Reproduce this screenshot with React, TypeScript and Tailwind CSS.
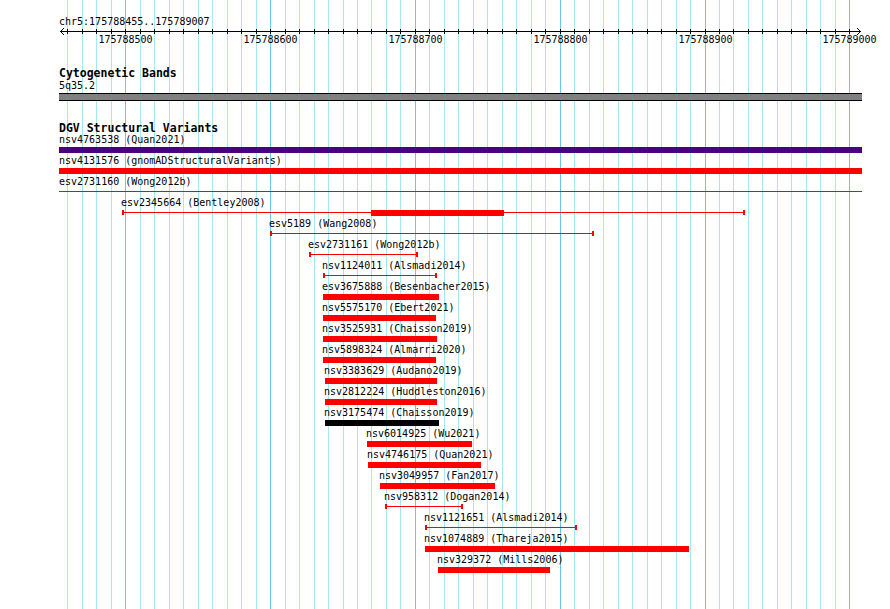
import React from 'react'

type Feature = {
  id: string
  source: string
  x1: number
  x2: number
  kind: 'bar' | 'line' | 'span'
  color: string
  thick?: [number, number]
}

// pixel positions of the 10bp grid (175788460 .. 175789000)
const grid = Array.from({ length: 55 }, (_, i) => {
  const k = i - 4
  return { x: Math.round(125.3 + k * 14.48), major: k % 10 === 0, k }
})

const majors = grid.filter((g) => g.major)

const features: Feature[] = [
  { id: 'nsv4763538', source: 'Quan2021', x1: 59, x2: 862, kind: 'bar', color: 'bg-[#4b0082]' },
  { id: 'nsv4131576', source: 'gnomADStructuralVariants', x1: 59, x2: 862, kind: 'bar', color: 'bg-[#ff0000]' },
  { id: 'esv2731160', source: 'Wong2012b', x1: 59, x2: 862, kind: 'span', color: 'bg-[#ff0000]' },
  { id: 'esv2345664', source: 'Bentley2008', x1: 122, x2: 745, kind: 'line', color: 'bg-[#ff0000]', thick: [371, 504] },
  { id: 'esv5189', source: 'Wang2008', x1: 270, x2: 594, kind: 'line', color: 'bg-[#ff0000]' },
  { id: 'esv2731161', source: 'Wong2012b', x1: 309, x2: 418, kind: 'line', color: 'bg-[#ff0000]' },
  { id: 'nsv1124011', source: 'Alsmadi2014', x1: 323, x2: 437, kind: 'line', color: 'bg-[#ff0000]' },
  { id: 'esv3675888', source: 'Besenbacher2015', x1: 323, x2: 439, kind: 'bar', color: 'bg-[#ff0000]' },
  { id: 'nsv5575170', source: 'Ebert2021', x1: 323, x2: 436, kind: 'bar', color: 'bg-[#ff0000]' },
  { id: 'nsv3525931', source: 'Chaisson2019', x1: 323, x2: 437, kind: 'bar', color: 'bg-[#ff0000]' },
  { id: 'nsv5898324', source: 'Almarri2020', x1: 323, x2: 436, kind: 'bar', color: 'bg-[#ff0000]' },
  { id: 'nsv3383629', source: 'Audano2019', x1: 325, x2: 437, kind: 'bar', color: 'bg-[#ff0000]' },
  { id: 'nsv2812224', source: 'Huddleston2016', x1: 325, x2: 437, kind: 'bar', color: 'bg-[#ff0000]' },
  { id: 'nsv3175474', source: 'Chaisson2019', x1: 325, x2: 439, kind: 'bar', color: 'bg-black' },
  { id: 'nsv6014925', source: 'Wu2021', x1: 367, x2: 472, kind: 'bar', color: 'bg-[#ff0000]' },
  { id: 'nsv4746175', source: 'Quan2021', x1: 368, x2: 481, kind: 'bar', color: 'bg-[#ff0000]' },
  { id: 'nsv3049957', source: 'Fan2017', x1: 380, x2: 495, kind: 'bar', color: 'bg-[#ff0000]' },
  { id: 'nsv958312', source: 'Dogan2014', x1: 385, x2: 463, kind: 'line', color: 'bg-[#ff0000]' },
  { id: 'nsv1121651', source: 'Alsmadi2014', x1: 425, x2: 577, kind: 'line', color: 'bg-[#ff0000]' },
  { id: 'nsv1074889', source: 'Thareja2015', x1: 425, x2: 689, kind: 'bar', color: 'bg-[#ff0000]' },
  { id: 'nsv329372', source: 'Mills2006', x1: 438, x2: 550, kind: 'bar', color: 'bg-[#ff0000]' },
]

const Row: React.FC<{ f: Feature }> = ({ f }) => {
  const left = f.x1 - 59
  const width = f.x2 - f.x1
  return (
    <div className="relative h-[21px]">
      <span
        className="absolute top-[1px] whitespace-nowrap leading-[10px]"
        style={{ left: Math.max(0, left - 1) }}
      >
        {f.id} ({f.source})
      </span>
      {f.kind === 'bar' && (
        <div className={`absolute top-[13px] h-[6px] ${f.color}`} style={{ left, width }} />
      )}
      {f.kind !== 'bar' && (
        <div className={`absolute top-[15px] h-[1px] ${f.color}`} style={{ left, width }} />
      )}
      {f.kind === 'line' && (
        <>
          <div className={`absolute top-[13px] h-[5px] w-[2px] ${f.color}`} style={{ left }} />
          <div className={`absolute top-[13px] h-[5px] w-[2px] ${f.color}`} style={{ left: left + width - 2 }} />
        </>
      )}
      {f.thick && (
        <div
          className={`absolute top-[13px] h-[6px] ${f.color}`}
          style={{ left: f.thick[0] - 59, width: f.thick[1] - f.thick[0] }}
        />
      )}
    </div>
  )
}

const App: React.FC = () => {
  return (
    <div className="relative w-[890px] h-[609px] overflow-hidden bg-white text-black text-[10px] font-['DejaVu_Sans_Mono',monospace]">
      {/* grid */}
      <div className="absolute inset-0">
        {grid.map((g) => (
          <div
            key={g.k}
            className={`absolute top-0 h-full w-[1px] ${g.major ? 'bg-[#6cc6ee]' : 'bg-[#a6e8f0]'}`}
            style={{ left: g.x }}
          />
        ))}
      </div>

      <div className="relative pl-[59px]">
        {/* ruler */}
        <div className="mt-[17px] leading-[9px] whitespace-nowrap">chr5:175788455..175789007</div>
        <svg width="803" height="9" className="block">
          <line x1="1" y1="5.5" x2="802" y2="5.5" stroke="black" strokeWidth="1" />
          <polyline points="5,2 1.5,5.5 5,9" fill="none" stroke="black" strokeWidth="1" />
          <polyline points="798,2 801.5,5.5 798,9" fill="none" stroke="black" strokeWidth="1" />
          {grid.map((g) => (
            <line key={g.k} x1={g.x - 59 + 0.5} y1="3" x2={g.x - 59 + 0.5} y2="8" stroke="black" strokeWidth="1" />
          ))}
        </svg>
        <div className="relative h-[10px]">
          {majors.map((g) => (
            <span
              key={g.k}
              className="absolute top-0 -translate-x-1/2 leading-[10px] whitespace-nowrap"
              style={{ left: g.x - 59 + 0.5 }}
            >
              {175788500 + g.k * 10}
            </span>
          ))}
        </div>

        {/* cytogenetic bands */}
        <div className="mt-[22px] text-[11.5px] leading-[12px] font-bold">Cytogenetic Bands</div>
        <div className="mt-[2px] leading-[10px]">5q35.2</div>
        <div className="mt-[2px] h-[8px] w-[803px] border-y border-black bg-[#808080]" />

        {/* DGV */}
        <div className="mt-[21px] text-[11.5px] leading-[12px] font-bold">DGV Structural Variants</div>
        <div className="w-[803px]">
          {features.map((f) => (
            <Row key={f.id + f.source} f={f} />
          ))}
        </div>
      </div>
    </div>
  )
}

export default App
